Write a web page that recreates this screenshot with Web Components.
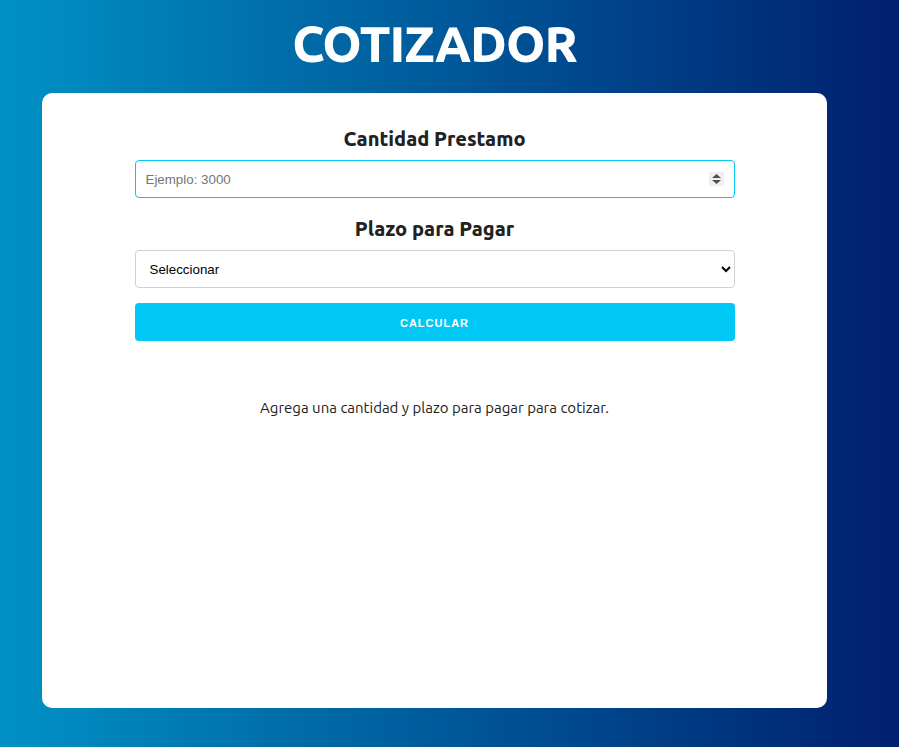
<!DOCTYPE html>
<html lang="es"><head><meta charset="utf-8"><title>Cotizador</title>
<style>
html{min-height:100%;background:linear-gradient(to right,#0091c7 0%,#008bc0 6%,#001f6e 100%)}
body{margin:0;font-family:"Ubuntu","Noto Sans","Open Sans",sans-serif;color:#222}
</style></head><body><loan-app></loan-app>
<script>
class LoanField extends HTMLElement{
 constructor(){super();this.attachShadow({mode:'open'});}
 connectedCallback(){
  const number=this.getAttribute('kind')==='number';
  this.shadowRoot.innerHTML=`<style>
  :host{display:block}
  *{box-sizing:border-box}
  label{display:block;text-align:center;font-size:20px;line-height:32px;font-weight:800;margin-bottom:5px}
  input,select{display:block;width:100%;height:38px;margin:0 0 15px;padding:6px 10px;border:1px solid #d1d1d1;border-radius:4px;background:#fff;color:#000;font-family:"Liberation Sans",Arial,sans-serif;outline:0}
  input{border-color:#00c8f5}
  input::-webkit-inner-spin-button{-webkit-appearance:none;opacity:1;width:15px;height:14px;background:#efefef url("data:image/svg+xml,%3Csvg xmlns='http://www.w3.org/2000/svg' width='15' height='14'%3E%3Cpath d='M3 6 7.5 2 12 6zM3 8h9L7.5 12z' fill='%23505050'/%3E%3C/svg%3E") center no-repeat}
  </style><label for="control">${this.getAttribute('label')}</label>${number?'<input id="control" type="number" placeholder="Ejemplo: 3000">':'<select id="control"><option>Seleccionar</option><option>3 meses</option><option>6 meses</option><option>12 meses</option><option>24 meses</option></select>'}`;
 }}
customElements.define('loan-field',LoanField);
class LoanApp extends HTMLElement{
 constructor(){super();this.attachShadow({mode:'open'}).innerHTML=`<style>
 :host{display:block;padding:13px 72px 39px 42px}
 *{box-sizing:border-box}
 h1{margin:0 0 20px;text-align:center;color:#fff;font-size:50px;line-height:60px;font-weight:800;letter-spacing:-1px}
 main{background:#fff;border-radius:10px;min-height:615px;padding:30px 20px}
 form{max-width:600px;margin:0 auto;display:block}
 button{display:block;width:100%;height:38px;border:0;border-radius:4px;background:#00c8f5;color:#fff;font:600 11px/38px "Liberation Sans",Arial,sans-serif;letter-spacing:1px;text-transform:uppercase}
 p{margin:55px 0 0;text-align:center;font-size:15px;line-height:24px;font-weight:450}
 </style><h1>COTIZADOR</h1><main><form><loan-field kind="number" label="Cantidad Prestamo"></loan-field><loan-field kind="select" label="Plazo para Pagar"></loan-field><button type="button">Calcular</button></form><p>Agrega una cantidad y plazo para pagar para cotizar.</p></main>`;}
}
customElements.define('loan-app',LoanApp);
</script></body></html>
